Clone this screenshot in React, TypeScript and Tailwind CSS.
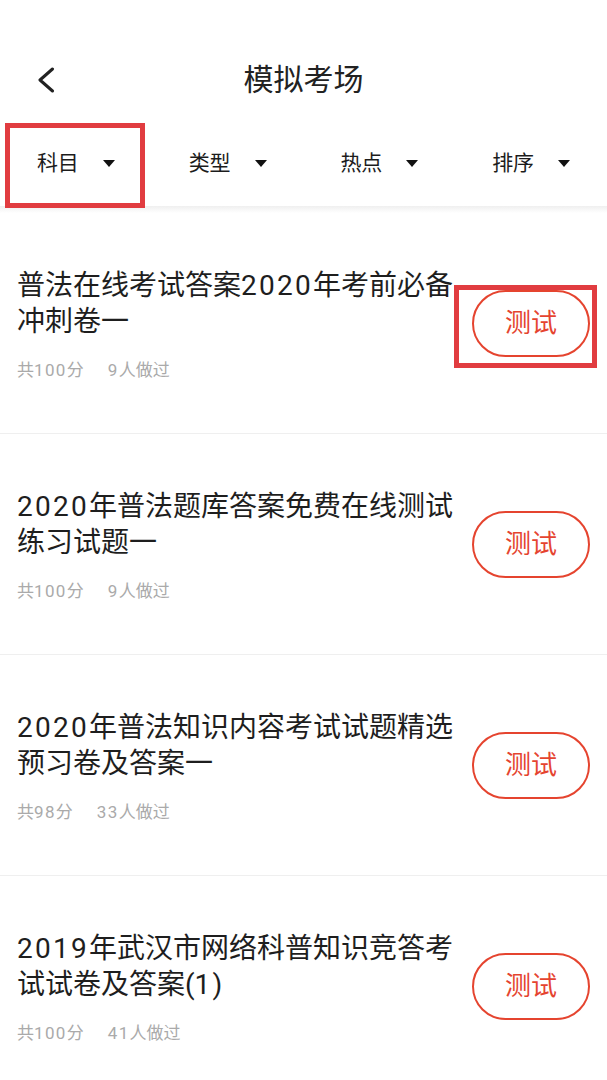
import React from "react";

const FONT = '"Roboto", "Noto Sans CJK SC", sans-serif';

type Item = { lines: [string, string]; score: string; count: string };

const items: Item[] = [
  { lines: ["普法在线考试答案2020年考前必备", "冲刺卷一"], score: "共100分", count: "9人做过" },
  { lines: ["2020年普法题库答案免费在线测试", "练习试题一"], score: "共100分", count: "9人做过" },
  { lines: ["2020年普法知识内容考试试题精选", "预习卷及答案一"], score: "共98分", count: "33人做过" },
  { lines: ["2019年武汉市网络科普知识竞答考", "试试卷及答案(1)"], score: "共100分", count: "41人做过" },
];

function withDigits(s: string) {
  return s.split(/(\d+)/).map((p, i) =>
    /^\d+$/.test(p) ? (
      <span key={i} className="tracking-[0.08em]">
        {p}
      </span>
    ) : (
      <React.Fragment key={i}>{p}</React.Fragment>
    )
  );
}

function Caret() {
  return (
    <svg width="12" height="7" viewBox="0 0 12 7" className="shrink-0">
      <polygon points="0,0 12,0 6,7" fill="#111111" />
    </svg>
  );
}

export default function App() {
  const filters = ["科目", "类型", "热点", "排序"];
  return (
    <div className="w-[607px] min-h-[1080px] bg-white overflow-hidden" style={{ fontFamily: FONT }}>
      {/* Header */}
      <div className="pt-[40px]">
        <div className="grid grid-cols-[1fr_auto_1fr] items-center h-[80px]">
          <div className="pl-[37px] flex items-center">
            <svg width="18" height="26" viewBox="0 0 18 26">
              <polyline
                points="15.5,2 3,13 15.5,24"
                fill="none"
                stroke="#222222"
                strokeWidth="3"
                strokeLinecap="round"
                strokeLinejoin="round"
              />
            </svg>
          </div>
          <div className="text-[30px] leading-[40px] text-[#222222]">模拟考场</div>
          <div />
        </div>
      </div>

      {/* Filter bar */}
      <div className="relative grid grid-cols-4 h-[86px]">
        {filters.map((f) => (
          <div key={f} className="flex items-center justify-center gap-[24px]">
            <span className="text-[21px] leading-[28px] text-[#1c1c1c]">{f}</span>
            <Caret />
          </div>
        ))}
        <div className="absolute left-[5px] top-[3px] w-[140px] h-[85px] border-[5px] border-[#e13c40]" />
      </div>
      <div className="h-[7px] bg-gradient-to-b from-[#efefef] to-white" />

      {/* List */}
      <div>
        {items.map((it, idx) => (
          <div key={idx} className="relative flex h-[221px] border-b border-[#efefef] px-[17px]">
            <div className="flex-1 pt-[55px]">
              <div className="text-[28px] leading-[36px] text-[#1e1e1e]">
                <div>{withDigits(it.lines[0])}</div>
                <div>{withDigits(it.lines[1])}</div>
              </div>
              <div className="mt-[18px] flex text-[17px] leading-[24px] text-[#aaaaaa]">
                <span>{withDigits(it.score)}</span>
                <span className="ml-[24px]">{withDigits(it.count)}</span>
              </div>
            </div>
            <div className="flex items-center">
              <div className="w-[118px] h-[67px] rounded-full border-2 border-[#e5442f] flex items-center justify-center text-[26px] text-[#e5442f]">
                测试
              </div>
            </div>
            {idx === 0 && (
              <div className="absolute left-[454px] top-[72px] w-[143px] h-[83px] border-[5px] border-[#e13c40]" />
            )}
          </div>
        ))}
      </div>
    </div>
  );
}
